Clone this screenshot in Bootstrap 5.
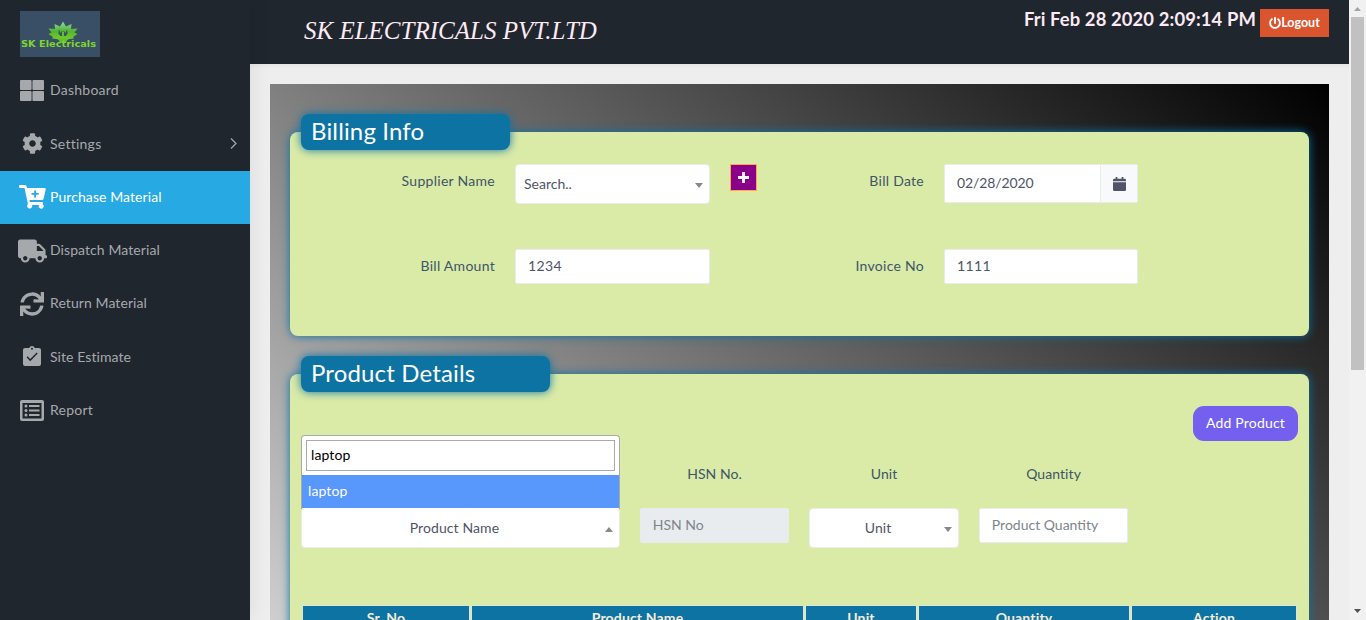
<!DOCTYPE html>
<html lang="en">
<head>
<meta charset="utf-8">
<title>SK Electricals</title>
<link href="https://cdn.jsdelivr.net/npm/bootstrap@5.3.0/dist/css/bootstrap.min.css" rel="stylesheet">
<style>
html,body{height:100%;overflow:hidden}
body{font-family:Lato,"Liberation Sans",sans-serif;font-size:14px;line-height:21px;color:#3e5569;background:#eee}
.shell{height:620px}
.side{width:250px;background:#20262e;box-shadow:1px 0 20px rgba(0,0,0,.08);z-index:2}
.brand{height:64px;padding:11px 0 0 20px}
.brand svg{display:block}
.side .item{height:53.3px;color:#a6a9ac;padding:0 12px 0 17px;letter-spacing:.08px;text-decoration:none}
.side .item .txt{margin-top:-2px}
.side .item .wide{letter-spacing:.25px}
.side .item.on{background:#27a9e3;color:#fff}
.side .ico{width:30px;margin-right:3px;display:flex;justify-content:center}
.side .item svg{fill:currentColor;display:block}
.topbar{height:64px;background:#20262e;color:#fdeaf4;padding:9px 20px 0 54px}
.title{font:italic 25px/32px "Liberation Serif",serif;margin-top:6px}
.clock{font-weight:700;font-size:18.4px;line-height:21px;letter-spacing:.12px}
.logout{background:#da542e;color:#fff;width:69px;height:28px;font-size:12.500px;font-weight:700;padding-bottom:1px}
.stage{padding:20px 20px 0;overflow:hidden;box-shadow:inset 0 5px 6px -5px rgba(0,0,0,.08)}
.panel{height:870px;background:linear-gradient(to top right,#fff,#000);padding:48px 20px 0}
.sheet{background:#daeba7;border-radius:8px;box-shadow:0 0 10px #0c73a3;padding:0 11px}
.bill{height:204px;margin-bottom:38px}
.prod{height:480px}
.tag{background:#0c73a3;color:#fff;font-size:24px;line-height:34px;height:36px;border-radius:8px;box-shadow:0 0 10px #0c73a3;padding-left:10px;position:relative;top:-18px;margin-bottom:-18px;letter-spacing:.15px}
.billgrid{display:grid;grid-template-columns:194px 195px 194px 194px;column-gap:20px;row-gap:45px;padding-top:14px}
.billgrid .lbl{text-align:right;line-height:34px;letter-spacing:.28px}
.fld{background:#fff;border:1px solid #e9ecef;border-radius:2px;height:35px;padding:0 12px;line-height:32px;color:#4f5467}
.num{letter-spacing:.35px;line-height:31px}
.sel{height:40px;border-radius:4px;line-height:37px;padding:0 8px;position:relative}
.sel.text-center{padding-right:20px}
.sel::after{content:"";position:absolute;right:6px;top:18px;border:4px solid transparent;border-top:5px solid #888;border-bottom:0}
.sel.up::after{border-top:0;border-bottom:5px solid #888;top:18px}
.plus{width:27px;height:27px;background:#8b008b;border:1px solid #ffa84c}
.date{height:39px;padding-right:0;line-height:35px;letter-spacing:-.12px}
.date .cal{width:37px;background:#f8f9fa;border-left:1px solid #e9ecef}
.add{width:105px;height:35px;background:#7460ee;color:#fff;border-radius:11px;margin-top:14px;padding-bottom:2px;letter-spacing:.2px}
.prodgrid{display:grid;grid-template-columns:318.800px 149.500px 149.500px 149.500px;column-gap:20px;padding-top:22px}
.prodgrid .lbl{text-align:center;height:45px;letter-spacing:.08px}
.prodgrid .muted{color:#7d858c}
.drop{position:absolute;left:-1px;right:-1px;bottom:38px;height:74px;background:#fff;border:1px solid #aaa;border-bottom:0;border-radius:4px 4px 0 0;padding:4px 3px 0;text-align:left;color:#111}
.drop .srch{border:1px solid #aaa;height:31px;line-height:27px;padding-left:4px;margin:0 1px 4px;color:#000;letter-spacing:.1px}
.drop .opt{background:#5897fb;color:#fff;height:33px;line-height:31px;margin:0 -3px;padding-left:6px;letter-spacing:.1px}
.pn{letter-spacing:.1px}
.grid5{display:grid;grid-template-columns:166px 331px 110px 210px 164px;gap:3px;margin:58px 0 0 2px}
.grid5 div{background:#0c73a3;color:#f8ecd8;font-weight:700;text-align:center;height:26px;line-height:23px;letter-spacing:.15px;box-shadow:0 0 0 1px #dfe3dc}
.sbar{width:17px;background:#f1f1f1}
.sbar .thumb{width:13px;height:353px;background:#c1c1c1}
</style>
</head>
<body>
<div class="shell d-flex">
<aside class="side flex-shrink-0">
  <div class="brand">
    <svg width="80" height="46" viewBox="0 0 80 46"><defs><linearGradient id="lg" x1="0" y1="0" x2="0" y2="1"><stop offset="0" stop-color="#8fd8b0"/><stop offset=".5" stop-color="#52b52e"/><stop offset="1" stop-color="#78d428"/></linearGradient></defs>
    <rect width="80" height="46" fill="#394f65"/>
    <path fill="url(#lg)" d="M43 10.500l3 5 5.500-2.500-.5 5 6.500-.5-3 4 3 1.500-4.500 3 1 1.500-5 .5-4 2h-4l-4-2-5-.5 1-1.500-4.500-3 3-1.500-3-4 6.500.5-.5-5 5.500 2.500z"/>
    <path fill="#394f65" d="M39 18l1.200 3.500h1l.6-1.500h2.400l.6 1.500h1L47 18l.6 4.500-2 2.500h-5.200l-2-2.500z"/>
    <path fill="#62c12b" d="M42 20.500h2v5h-2zM38 27.500h10l-2 4h-6z"/>
    <text x="1" y="35.500" font-family="DejaVu Sans" font-weight="700" font-size="9.500" fill="#7ed52c" textLength="75" lengthAdjust="spacingAndGlyphs">SK Electricals</text></svg>
  </div>
  <nav>
    <a class="item d-flex align-items-center"><span class="ico"><svg width="24" height="21" viewBox="0 0 24 21"><rect width="11.600" height="10" rx="1"/><rect x="12.400" width="11.600" height="10" rx="1"/><rect y="11" width="11.600" height="10" rx="1"/><rect x="12.400" y="11" width="11.600" height="10" rx="1"/></svg></span><span class="txt wide">Dashboard</span></a>
    <a class="item d-flex align-items-center"><span class="ico"><svg width="21" height="21" viewBox="0 0 512 512"><path d="M487.400 315.700l-42.600-24.600c4.300-23.200 4.300-47 0-70.200l42.600-24.600c4.900-2.800 7.100-8.600 5.500-14-11.100-35.600-30-67.800-54.700-94.600-3.800-4.100-10-5.100-14.800-2.300L380.800 110c-17.900-15.400-38.500-27.300-60.800-35.100V25.800c0-5.600-3.900-10.500-9.400-11.700-36.700-8.200-74.300-7.800-109.200 0-5.500 1.200-9.400 6.100-9.400 11.700V75c-22.200 7.900-42.800 19.800-60.800 35.100L88.700 85.500c-4.900-2.800-11-1.900-14.800 2.300-24.700 26.700-43.600 58.900-54.700 94.600-1.700 5.400.6 11.200 5.500 14L67.300 221c-4.300 23.200-4.300 47 0 70.200l-42.600 24.600c-4.900 2.800-7.100 8.600-5.500 14 11.100 35.600 30 67.800 54.700 94.600 3.800 4.100 10 5.100 14.800 2.300l42.600-24.600c17.900 15.400 38.500 27.300 60.800 35.100v49.200c0 5.600 3.900 10.500 9.400 11.700 36.700 8.200 74.300 7.800 109.200 0 5.500-1.200 9.400-6.100 9.400-11.700v-49.200c22.200-7.900 42.800-19.800 60.800-35.100l42.600 24.600c4.900 2.800 11 1.900 14.800-2.300 24.700-26.700 43.600-58.900 54.700-94.600 1.500-5.500-.7-11.300-5.600-14.100zM256 336c-44.100 0-80-35.900-80-80s35.900-80 80-80 80 35.900 80 80-35.900 80-80 80z"/></svg></span><span class="wide">Settings</span><svg class="ms-auto" width="8" height="12" viewBox="0 0 8 12" style="fill:none"><path d="M1 .5l5 5-5 5" stroke="currentColor" stroke-width="1.200"/></svg></a>
    <a class="item on d-flex align-items-center"><span class="ico"><svg width="27" height="24" viewBox="0 0 27 24"><path fill-rule="evenodd" d="M1 0h5q1.200 0 1.500 1.300L8 3h17.500q1.500 0 1.200 1.500L24.500 14q-.3 1-1.500 1H10.500l.3 2H23q1.200 0 1 1.200l-.3 1A2.500 2.500 0 1 1 20 20H13a2.500 2.500 0 1 1-4-.8L5.500 3H1Q0 3 0 2V1Q0 0 1 0zM15.200 5.500V8h-2.700v1.800h2.700v2.700H17V9.800h2.700V8H17V5.500z"/></svg></span><span class="txt">Purchase Material</span></a>
    <a class="item d-flex align-items-center"><span class="ico"><svg style="margin-left:1px" width="29" height="24" viewBox="0 0 640 512"><path d="M624 352h-16V243.900c0-12.700-5.100-24.900-14.100-33.900L494 110.100c-9-9-21.200-14.100-33.900-14.100H416V48c0-26.500-21.500-48-48-48H48C21.500 0 0 21.500 0 48v320c0 26.500 21.500 48 48 48h16c0 53 43 96 96 96s96-43 96-96h128c0 53 43 96 96 96s96-43 96-96h48c8.800 0 16-7.200 16-16v-32c0-8.800-7.200-16-16-16zM160 464c-26.500 0-48-21.500-48-48s21.500-48 48-48 48 21.500 48 48-21.500 48-48 48zm320 0c-26.500 0-48-21.500-48-48s21.500-48 48-48 48 21.500 48 48-21.500 48-48 48zm80-208H416V144h44.100l99.900 99.900V256z"/></svg></span><span class="txt">Dispatch Material</span></a>
    <a class="item d-flex align-items-center"><span class="ico"><svg width="24" height="24" viewBox="0 0 512 512"><path d="M440.650 12.570l4 82.770A247.160 247.160 0 0 0 255.830 8C134.730 8 33.910 94.920 12.290 209.820A12 12 0 0 0 24.090 224h49.050a12 12 0 0 0 11.670-9.260 175.910 175.910 0 0 1 317-56.940l-101.460-4.860a12 12 0 0 0-12.570 12v47.410a12 12 0 0 0 12 12H500a12 12 0 0 0 12-12V12a12 12 0 0 0-12-12h-47.370a12 12 0 0 0-11.980 12.570zM255.830 432a175.610 175.610 0 0 1-146-77.800l101.800 4.870a12 12 0 0 0 12.570-12v-47.400a12 12 0 0 0-12-12H12a12 12 0 0 0-12 12V500a12 12 0 0 0 12 12h47.350a12 12 0 0 0 12-12.600l-4.150-82.570A247.170 247.170 0 0 0 255.830 504c121.110 0 221.930-86.920 243.550-201.820a12 12 0 0 0-11.800-14.180h-49.050a12 12 0 0 0-11.670 9.260A175.860 175.860 0 0 1 255.830 432z"/></svg></span><span class="txt">Return Material</span></a>
    <a class="item d-flex align-items-center"><span class="ico"><svg width="24" height="24" viewBox="0 0 24 24"><path fill-rule="evenodd" d="M5 3h4.200a3 3 0 0 1 5.600 0H19q2 0 2 2v14q0 2-2 2H5q-2 0-2-2V5q0-2 2-2zM12 2.700a1 1 0 1 0 0 2 1 1 0 1 0 0-2zM7.600 11.300l-1 1 3.600 3.900 7.500-7.800-1-1-6.500 6.700z"/></svg></span><span class="txt">Site Estimate</span></a>
    <a class="item d-flex align-items-center"><span class="ico"><svg width="24" height="21" viewBox="0 0 24 21"><path fill-rule="evenodd" d="M2 0h20q2 0 2 2v17q0 2-2 2H2q-2 0-2-2V2Q0 0 2 0zM2.500 3v15.500h19V3z"/><path d="M9 5h10.500v2H9zM9 9.500h10.500v2H9zM9 14h10.500v2H9z"/><circle cx="6" cy="6" r="1.500"/><circle cx="6" cy="10.500" r="1.500"/><circle cx="6" cy="15" r="1.500"/></svg></span><span class="txt wide">Report</span></a>
  </nav>
</aside>
<main class="flex-grow-1 d-flex flex-column">
  <header class="topbar d-flex align-items-start flex-shrink-0">
    <div class="title">SK ELECTRICALS PVT.LTD</div>
    <div class="clock ms-auto me-1">Fri Feb 28 2020 2:09:14 PM</div>
    <div class="logout d-flex align-items-center justify-content-center"><svg width="12" height="12" viewBox="0 0 512 512" fill="#fff"><path d="M400 54.100c63 45 104 118.600 104 201.900 0 136.800-110.800 247.700-247.500 248C120 504.300 8.200 393 8 256.400 7.900 173.100 48.900 99.300 111.800 54.200c11.700-8.300 28-4.800 35 7.700L162.600 90c5.900 10.500 3.100 23.800-6.600 31-41.500 30.800-68 79.600-68 134.900-.1 92.300 74.500 168.100 168 168.100 91.600 0 168.600-74.200 168-169.100-.3-51.800-24.700-101.800-68.100-134-9.700-7.200-12.400-20.500-6.500-30.900l15.800-28.100c7-12.400 23.200-16.100 34.800-7.800zM296 264V24c0-13.300-10.700-24-24-24h-32c-13.300 0-24 10.700-24 24v240c0 13.300 10.700 24 24 24h32c13.300 0 24-10.700 24-24z"/></svg><span>Logout</span></div>
  </header>
  <div class="stage flex-grow-1">
    <div class="panel">
      <section class="sheet bill">
        <div class="tag" style="width:209px">Billing Info</div>
        <div class="billgrid">
          <div class="lbl">Supplier Name</div>
          <div class="fld sel">Search..</div>
          <div class="lbl d-flex justify-content-between"><span class="plus d-flex align-items-center justify-content-center"><svg width="11" height="11" viewBox="0 0 11 11"><path d="M5.500 0v11M0 5.500h11" stroke="#fff" stroke-width="2.800"/></svg></span>Bill Date</div>
          <div class="fld date d-flex"><span>02/28/2020</span><span class="cal ms-auto d-flex align-items-center justify-content-center"><svg width="13" height="14" viewBox="0 0 13 14" fill="#4f5467"><path d="M0 4.200V3q0-1.300 1.300-1.300H2.600V0h1.800v1.700h4.200V0h1.800v1.700h1.300Q13 1.700 13 3v1.200zM0 5.200h13v7.500q0 1.300-1.300 1.300H1.300Q0 14 0 12.700z"/></svg></span></div>
          <div class="lbl">Bill Amount</div>
          <div class="fld num">1234</div>
          <div class="lbl">Invoice No</div>
          <div class="fld num">1111</div>
        </div>
      </section>
      <section class="sheet prod">
        <div class="tag" style="width:249px">Product Details</div>
        <div class="d-flex justify-content-end"><div class="add d-flex align-items-center justify-content-center">Add Product</div></div>
        <div class="prodgrid">
          <div class="lbl"></div><div class="lbl">HSN No.</div><div class="lbl">Unit</div><div class="lbl">Quantity</div>
          <div class="fld sel up text-center"><div class="drop"><div class="srch">laptop</div><div class="opt">laptop</div></div><span class="pn">Product Name</span></div>
          <div class="fld muted" style="background:#e9ecef">HSN No</div>
          <div class="fld sel text-center"><span class="pn">Unit</span></div>
          <div class="fld muted">Product Quantity</div>
        </div>
        <div class="grid5"><div>Sr. No</div><div>Product Name</div><div>Unit</div><div>Quantity</div><div>Action</div></div>
      </section>
    </div>
  </div>
</main>
<div class="sbar d-flex flex-column align-items-center flex-shrink-0">
  <svg width="17" height="17" viewBox="0 0 17 17"><path d="M5 11l3.500-4L12 11z" fill="#a3a3a3"/></svg>
  <div class="thumb"></div>
  <svg class="mt-auto" width="17" height="17" viewBox="0 0 17 17"><path d="M5 6l3.500 4L12 6z" fill="#505050"/></svg>
</div>
</div>
<script src="https://cdn.jsdelivr.net/npm/bootstrap@5.3.0/dist/js/bootstrap.bundle.min.js"></script>
</body>
</html>
